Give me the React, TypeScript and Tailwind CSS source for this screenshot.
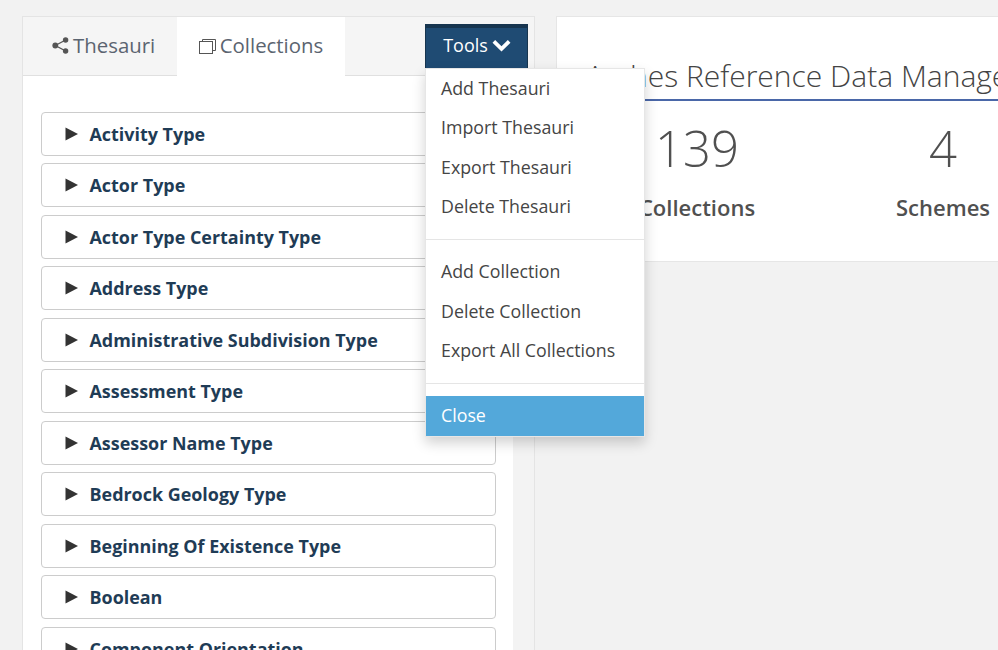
const rows = [
  "Activity Type",
  "Actor Type",
  "Actor Type Certainty Type",
  "Address Type",
  "Administrative Subdivision Type",
  "Assessment Type",
  "Assessor Name Type",
  "Bedrock Geology Type",
  "Beginning Of Existence Type",
  "Boolean",
  "Component Orientation",
]

const menuGroups = [
  ["Add Thesauri", "Import Thesauri", "Export Thesauri", "Delete Thesauri"],
  ["Add Collection", "Delete Collection", "Export All Collections"],
]

function ShareIcon() {
  return (
    <svg width="17" height="17" viewBox="0 0 17 17" className="shrink-0 fill-[#555]">
      <circle cx="3.3" cy="8.5" r="2.9" />
      <circle cx="13.6" cy="3" r="2.7" />
      <circle cx="13.6" cy="14" r="2.7" />
      <path d="M3.3 8.5 13.6 3M3.3 8.5 13.6 14" stroke="#555" strokeWidth="1.4" fill="none" />
    </svg>
  )
}

function CollectionsIcon() {
  return (
    <svg width="17" height="16" viewBox="0 0 17 16" fill="none" stroke="#555" strokeWidth="1" className="shrink-0">
      <rect x="0.5" y="3.5" width="13" height="12" fill="#fff" />
      <path d="M3.5 3.5V1.5H16.5V12.5H13.5" />
    </svg>
  )
}

function ChevronDown() {
  return (
    <svg width="19" height="13" viewBox="0 0 18 12" className="fill-white">
      <path d="M0.5 3.4 3 0.9 9 6.8 15 0.9 17.5 3.4 9 11.6Z" />
    </svg>
  )
}

function ToolsMenu() {
  return (
    <div className="absolute left-[402px] top-[50.7px] z-10 w-[220px] border border-[#e6e6e6] bg-white shadow-[0_6px_12px_rgba(0,0,0,0.18)]">
      {menuGroups.map((group) => (
        <div key={group[0]} className="mb-[11.6px] border-b border-[#e5e5e5] pb-[12.7px] first:mb-[12.3px] first:pb-[12.5px]">
          {group.map((item) => (
            <div key={item} className="flex h-[39.4px] items-center px-[15px] text-[17.8px] text-[#454545]">
              {item}
            </div>
          ))}
        </div>
      ))}
      <div className="flex h-10 items-center bg-[#53a8da] px-[15px] text-[17.8px] text-white">Close</div>
    </div>
  )
}

function LeftPanel() {
  return (
    <div className="relative flex h-[700px] w-[513px] shrink-0 flex-col border border-[#e4e4e4] bg-[#f3f3f3]">
      <div className="flex h-[59px] shrink-0 border-b border-[#e0e0e0] bg-[#f5f5f5] text-[20.4px] text-[#5b6470]">
        <div className="flex w-[154px] items-center gap-1 pb-[2px] pl-[29px]">
          <ShareIcon />
          <span>Thesauri</span>
        </div>
        <div className="mb-[-1px] flex w-[168px] items-center justify-center gap-1 bg-white pb-[2px]">
          <CollectionsIcon />
          <span>Collections</span>
        </div>
        <div className="ml-[80px] mt-[7px] flex h-[45px] w-[103px] items-center justify-center gap-1 border-x border-b border-t-4 border-[#17354f] bg-[#1f4b73] pb-[6px] pl-px text-[18px] text-white">
          <span>Tools</span>
          <ChevronDown />
        </div>
      </div>
      <div className="flex w-[490px] flex-1 flex-col gap-[7.5px] bg-white pl-[18px] pr-[17px] pt-[35.95px]">
        {rows.map((row) => (
          <div key={row} className="flex h-11 shrink-0 items-center rounded border border-[#cccccc] bg-white pl-[23px]">
            <svg width="13" height="14" viewBox="0 0 13 14" className="mr-[11.5px] shrink-0 fill-[#333]">
              <path d="M0.5 0.5 13 7 0.5 13.5Z" />
            </svg>
            <span className="pt-[0.6px] text-[17.93px] font-bold text-[#1f3c56]">{row}</span>
          </div>
        ))}
      </div>
      <ToolsMenu />
    </div>
  )
}

function StatsPanel() {
  return (
    <div className="h-[246px] w-[600px] shrink-0 border border-[#e6e6e6] bg-white pl-[17px]">
      <div className="mt-[38px] h-[46px] w-[583px] overflow-hidden whitespace-nowrap border-b-2 border-[#4a67a8] pl-3 text-[30px] leading-[42px] font-light text-[#444]">
        Arches Reference Data Manager
      </div>
      <div className="mt-[13px] grid grid-cols-[246px_246px] text-[#505050]">
        <div className="flex flex-col items-center">
          <span className="text-[49px] leading-[68px] font-light">139</span>
          <span className="mt-[10px] text-[22px] leading-[30px] font-semibold">Collections</span>
        </div>
        <div className="flex flex-col items-center">
          <span className="text-[49px] leading-[68px] font-light">4</span>
          <span className="mt-[10px] text-[22px] leading-[30px] font-semibold">Schemes</span>
        </div>
      </div>
    </div>
  )
}

export default function App() {
  return (
    <div className="flex h-[650px] w-[998px] gap-[21px] overflow-hidden bg-[#f2f2f2] pl-[22px] pt-4 font-['Open_Sans',sans-serif]">
      <LeftPanel />
      <StatsPanel />
    </div>
  )
}
